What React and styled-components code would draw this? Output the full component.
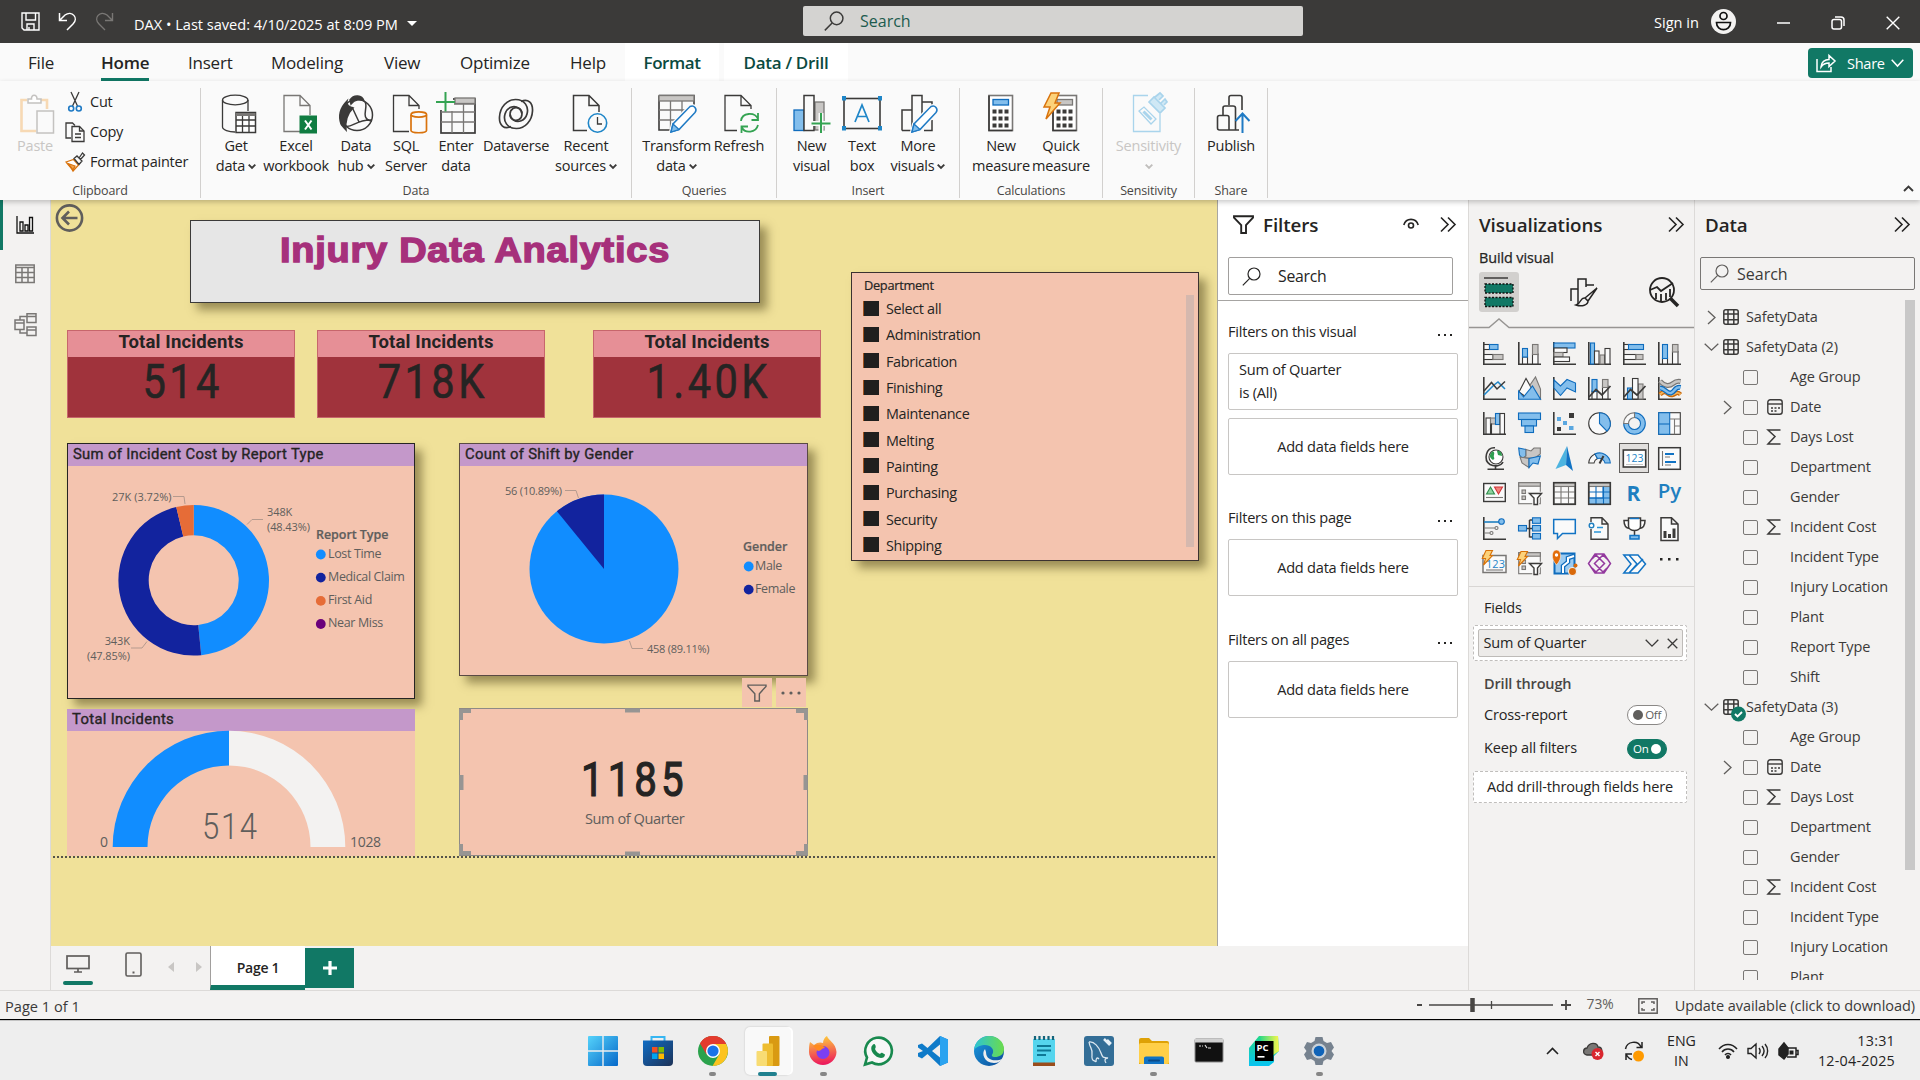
import React from "react";
import styled, { createGlobalStyle, css } from "styled-components";

const UI = `"Open Sans", "Noto Sans", sans-serif`;
const DIN = `Roboto, "Liberation Sans", sans-serif`;
const GREEN = "#117865";
const INK = "#252423";
const K = "#3b3a39";
const BL = "#83beec";
const BS = "#0f6cbd";
const GF = "#c8c6c4";
const GS = "#797775";

const Global = createGlobalStyle`
  * { box-sizing: border-box; }
  html, body { margin: 0; padding: 0; overflow: hidden; }
  body { width: 1920px; height: 1080px; font-family: ${UI}; font-size: 15px; color: ${INK}; background: #f3f2f1; }
  svg { display: block; flex: none; overflow: visible; }
`;

const Window = styled.div`
  width: 1920px; height: 1080px; display: flex; flex-direction: column; overflow: hidden;
`;

/* ---------- text ---------- */
const Txt = styled.span`
  display: block;
  flex: none;
  font-family: ${(p) => p.$font || UI};
  font-size: ${(p) => p.$s || 15}px;
  line-height: ${(p) => p.$lh || 20}px;
  font-weight: ${(p) => p.$w || 400};
  letter-spacing: ${(p) => p.$ls || 0}px;
  color: ${(p) => p.$c || INK};
  white-space: nowrap;
  text-align: ${(p) => p.$align || "left"};
  ${(p) => p.$stroke && css`-webkit-text-stroke: ${p.$stroke}px currentColor;`}
  ${(p) => p.$ml && css`margin-left: ${p.$ml}px;`}
  ${(p) => p.$mt && css`margin-top: ${p.$mt}px;`}
`;
const RibbonText = styled(Txt).attrs({ $s: 14.5, $ls: -0.22 })``;
const PaneText = styled(Txt).attrs({ $s: 14.6, $ls: -0.24 })``;
const VizText = styled(Txt).attrs({ $s: 14.5, $ls: -0.15 })``;
const VisualTitle = styled(Txt).attrs({ $s: 14.8, $w: 400, $font: DIN, $ls: 0.33, $stroke: 0.35 })``;
const PaneTitle = styled(Txt).attrs({ $s: 18.8, $w: 600, $lh: 24, $ls: -0.08 })``;

/* ---------- title bar ---------- */
const TitleBar = styled.header`
  height: 43px; flex: none; background: ${K}; display: flex; align-items: center; color: #fff;
`;
const QuickAccess = styled.div`
  display: flex; align-items: center; width: 803px; padding-left: 21px;
  svg { margin-right: 18px; }
`;
const DocTitle = styled(Txt)`margin-left: 2px; margin-top: 4px;`;
const Caret = styled.i`
  border: 5px solid transparent; border-top-color: #fff; border-bottom: 0; margin: 3px 0 0 9px;
`;
const TopSearch = styled.div`
  width: 500px; height: 30px; margin-top: -1px; background: #d4d3d1; border-radius: 2px; display: flex; align-items: center; gap: 16px; padding-left: 21px;
`;
const WindowControls = styled.div`
  margin-left: auto; display: flex; align-items: center; padding-right: 20px;
`;
const Avatar = styled.div`margin: 0 41px 0 12px;`;
const ControlGap = styled.div`margin-right: ${(p) => p.$r}px; padding-top: 2px;`;

/* ---------- menu tabs ---------- */
const TabBar = styled.nav`
  height: 38px; flex: none; background: #fafafa; display: flex; position: relative; padding-left: 28px;
`;
const Tab = styled.div`
  width: ${(p) => p.$w}px; height: 38px; display: flex; align-items: flex-start; flex: none; padding-top: 8px;
`;
const TabLabel = styled(Txt)`
  height: 30px; border-bottom: 3px solid ${(p) => (p.$on ? GREEN : "transparent")};
`;
const ContextTab = styled.div`
  width: ${(p) => p.$w}px; height: 38px; margin-right: 5px; background: #fff; display: flex; justify-content: center; padding-top: 8px;
`;
const ShareButton = styled.button`
  margin: 5px 7px 0 auto; width: 105px; height: 30px; border: 0; border-radius: 4px; background: ${GREEN}; color: #fff;
  display: flex; align-items: center; padding: 0 0 0 8px; gap: 6px;
`;

/* ---------- ribbon ---------- */
const Ribbon = styled.section`
  height: 119px; flex: none; background: #fafafa; display: flex; position: relative; z-index: 2; box-shadow: 0 2px 5px rgba(0,0,0,.22);
`;
const Group = styled.div`
  width: ${(p) => p.$w}px; flex: none; height: 119px; display: flex; flex-direction: column;
`;
const GroupBody = styled.div`
  display: flex; border-right: 1px solid #d2d0ce; margin-top: 7px; height: 93px; padding: 4px 0 0 ${(p) => p.$pl || 0}px;
`;
const GroupFoot = styled.div`
  height: 17px; display: flex; justify-content: center; align-items: flex-end; border-right: 1px solid #d2d0ce;
`;
const RibbonItem = styled.div`
  width: ${(p) => p.$w}px; flex: none; display: flex; flex-direction: column; align-items: center; 
`;
const IconSlot = styled.div`
  height: 44px; display: flex; align-items: center; justify-content: center; padding-left: ${(p) => p.$pl || 0}px;
`;
const Line = styled.div`
  display: flex; align-items: center; gap: 3px; height: 20px; justify-content: center;
`;
const ClipList = styled.div`
  display: flex; flex-direction: column; gap: 10px; padding: 0 0 0 12px;
`;
const ClipRow = styled.div`
  display: flex; align-items: center; height: 20px;
  > span { margin-left: 5px; }
`;
const ClipIcon = styled.div`width: 20px; display: flex; justify-content: center;`;
const Collapse = styled.div`margin: auto 6px 8px auto;`;

/* ---------- body ---------- */
const Body = styled.main`height: 790px; flex: none; display: flex;`;
const Rail = styled.aside`
  width: 51px; background: #f3f2f1; border-right: 1px solid #dcdad8; display: flex; flex-direction: column;
`;
const RailItem = styled.div`
  height: 50px; display: flex; align-items: center; justify-content: center; padding: 0 3px ${(p) => (p.$on ? 0 : 2)}px 0;
  border-left: 3px solid ${(p) => (p.$on ? GREEN : "transparent")};
`;
const Center = styled.div`width: 1417px; display: flex; flex-direction: column;`;
const Work = styled.div`height: 746px; display: flex;`;
const Canvas = styled.div`
  width: 1167px; height: 746px; background: #f0e199; position: relative; overflow: hidden; border-right: 1px solid #a8a6a2;
`;
const Visual = styled.div`
  position: absolute; left: ${(p) => p.$x - 51}px; top: ${(p) => p.$y - 200}px; width: ${(p) => p.$w}px; height: ${(p) => p.$h}px;
  background: ${(p) => p.$bg || "#f4c4af"};
  ${(p) => p.$border && css`border: 1px solid ${p.$border};`}
  ${(p) => p.$shadow && css`box-shadow: 7px 7px 9px rgba(70,60,20,.5);`}
  display: flex; flex-direction: column;
`;
const Banner = styled(Txt)`
  text-align: center; transform: scaleX(1.1);
`;
const VisualHead = styled.div`
  height: 22px; flex: none; background: #c498ca; padding: 0 0 2px 5px; display: flex; align-items: center;
`;
const CardHead = styled.div`
  height: 26px; flex: none; background: #e68f96; display: flex; justify-content: center; align-items: center; padding-bottom: 5px;
`;
const CardValue = styled(Txt)`
  text-align: center; transform: scaleX(.85); padding-left: 4px;
`;
const ChartBox = styled.div`flex: 1; position: relative;`;
const Label = styled(Txt)`
  position: absolute; left: ${(p) => p.$x}px; top: ${(p) => p.$y}px;
  ${(p) => p.$sx && css`transform: scaleX(${p.$sx}); transform-origin: 0 0;`}
`;
const SlicerHead = styled(Txt)`padding-left: 12px;`;
const SlicerRow = styled.div`
  display: flex; align-items: center; height: 26.45px; gap: 7px; padding: 0 0 2px 11px;
`;
const BlackBox = styled.i`width: 16px; height: 15px; background: #201f1e; border-left: 1px solid #a0501a; margin-bottom: 2px;`;
const SlicerScroll = styled.i`position: absolute; right: 4px; top: 22px; width: 8px; height: 252px; background: #d5b8ae;`;
const PageEdge = styled.i`
  position: absolute; left: 2px; top: 656px; width: 1164px; height: 2px;
  background: repeating-linear-gradient(90deg, #55534a 0 2px, transparent 2px 4px);
`;
const VisualTool = styled.div`
  position: absolute; left: ${(p) => p.$x - 51}px; top: 478px; width: 30px; height: 29px; background: #f4c4af; display: flex; align-items: center; justify-content: center;
`;

/* ---------- filters pane ---------- */
const Filters = styled.section`width: 250px; background: #fff; display: flex; flex-direction: column;`;
const FilterHead = styled.div`
  height: 57px; display: flex; align-items: center; padding: 0 12px 8px 15px; gap: 9px;
`;
const SearchBox = styled.div`
  width: ${(p) => p.$w}px; height: ${(p) => p.$h}px; margin: ${(p) => p.$mt || 0}px 0 0 ${(p) => p.$ml}px; border: 1px solid ${(p) => p.$bc}; border-radius: 2px;
  display: flex; align-items: center; padding-left: ${(p) => p.$pl}px; gap: ${(p) => p.$gap}px; flex: none;
`;
const Rule = styled.i`display: block; height: 1px; background: ${(p) => p.$c || "#a6a4a2"}; margin-top: ${(p) => p.$mt || 0}px; flex: none;`;
const FilterTitle = styled.div`
  display: flex; justify-content: space-between; padding: 0 16px 0 10px; height: 20px; margin: ${(p) => p.$mt}px 0 ${(p) => p.$mb || 12}px; flex: none;
`;
const FilterBox = styled.div`
  width: 230px; height: 57px; margin: 0 0 8px 10px; border: 1px solid #c8c6c4; border-radius: 2px; flex: none;
  display: flex; flex-direction: column; justify-content: center; align-items: ${(p) => (p.$left ? "flex-start" : "center")}; padding: 0 0 1px ${(p) => (p.$left ? 10 : 0)}px;
`;
const Push = styled.div`margin-left: auto; display: flex; align-items: center; gap: ${(p) => p.$gap || 0}px;`;
const Dots = styled.div`display: flex; gap: 4px; align-items: center; padding-top: 8px; i { width: 2px; height: 2px; background: ${INK}; }`;

/* ---------- page tabs ---------- */
const PageStrip = styled.div`height: 44px; background: #f3f2f1; display: flex; align-items: flex-start;`;
const ViewMode = styled.div`
  width: ${(p) => p.$w}px; height: 44px; display: flex; flex-direction: column; align-items: center; padding-top: ${(p) => p.$pt}px; margin-left: ${(p) => p.$ml || 0}px;
`;
const ModeBar = styled.i`width: 30px; height: 4px; border-radius: 2px; background: ${GREEN}; margin-top: 8px;`;
const PageArrow = styled.i`
  border: 5px solid transparent; margin-top: 16px;
  ${(p) => (p.$l ? "border-right: 6px solid #c8c6c4; border-left: 0; margin-left: 26px;" : "border-left: 6px solid #c8c6c4; border-right: 0; margin-left: 22px;")}
`;
const PageTab = styled.div`
  margin-left: 8px; width: 95px; height: 44px; background: #fff; border-left: 1px solid #a19f9d; border-bottom: 5px solid ${GREEN};
  display: flex; justify-content: center; padding-top: 12px;
`;
const AddPage = styled.div`
  width: 49px; height: 40px; margin-top: 2px; background: ${GREEN}; display: flex; align-items: center; justify-content: center;
`;

/* ---------- visualizations pane ---------- */
const Pane = styled.section`
  width: 226px; background: #f3f2f1; border-left: 1px solid #dcdad8; display: flex; flex-direction: column; flex: none;
`;
const PaneHead = styled.div`
  height: 49px; display: flex; align-items: center; padding: 0 10px 0 10px; flex: none;
`;
const BuildLabel = styled.div`padding-left: 10px; height: 23px; margin-top: -1px; margin-bottom: 1px; flex: none;`;
const ModeRow = styled.div`height: 46px; display: flex; padding-left: 10px; align-items: flex-start; flex: none;`;
const ModeButton = styled.div`
  width: 40px; height: 40px; border-radius: 3px; background: ${(p) => (p.$on ? "#d2d0ce" : "transparent")};
  display: flex; align-items: center; justify-content: center; margin-right: ${(p) => p.$mr || 0}px;
`;
const IconGrid = styled.div`
  display: grid; grid-template-columns: repeat(6, 35px); grid-auto-rows: 35px; padding: 10px 0 0 8px; height: 258px; flex: none;
`;
const GridCell = styled.div`
  width: 30px; height: 30px; margin: 0 0 0 2px; display: flex; align-items: center; justify-content: center;
  ${(p) => p.$on && css`background: #e1dfdd; outline: 1px solid #605e5c; outline-offset: -1px;`}
`;
const FieldsLabel = styled.div`padding-left: 15px; margin-top: ${(p) => p.$mt}px; height: 20px; flex: none;`;
const DropZone = styled.div`
  margin: ${(p) => p.$mt}px 0 0 4px; width: 214px; height: ${(p) => p.$h}px; background: #fff; border: 1px dashed #c0bebc; border-radius: 2px;
  display: flex; align-items: center; justify-content: center; flex: none;
`;
const FieldPill = styled.div`
  width: 205px; height: 28px; background: #edebe9; border: 1px solid #bebbb8; border-radius: 2px; display: flex; align-items: center; padding: 0 4px 0 5px;
`;
const ToggleRow = styled.div`
  display: flex; align-items: center; justify-content: space-between; padding: 0 27px 0 15px; height: 20px; margin-top: ${(p) => p.$mt}px; flex: none;
`;
const Toggle = styled.div`
  width: 40px; height: 20px; border-radius: 10px; border: 1px solid ${(p) => (p.$on ? GREEN : "#8a8886")}; background: ${(p) => (p.$on ? GREEN : "#fff")};
  display: flex; align-items: center; justify-content: space-between; flex-direction: ${(p) => (p.$on ? "row" : "row-reverse")}; padding: 0 5px;
  i { width: 10px; height: 10px; border-radius: 5px; background: ${(p) => (p.$on ? "#fff" : "#605e5c")}; }
`;

/* ---------- data pane ---------- */
const TreeWrap = styled.div`display: flex; height: 680px; overflow: hidden; margin-top: 10px; flex: none;`;
const Tree = styled.div`width: 210px; padding-top: 2px; flex: none;`;
const TreeRow = styled.div`height: 30px; display: flex; align-items: center; padding-left: ${(p) => p.$pl || 8}px;`;
const Slot = styled.div`width: ${(p) => p.$w}px; flex: none; display: flex; align-items: center; justify-content: ${(p) => (p.$c ? "center" : "flex-start")}; padding-left: ${(p) => p.$pl || 0}px;`;
const Check = styled.i`width: 15px; height: 15px; border: 1px solid #797775; border-radius: 2px; flex: none;`;
const TreeScroll = styled.i`width: 10px; height: 570px; background: #c8c8c8;`;

/* ---------- status bar ---------- */
const StatusBar = styled.footer`
  height: 30px; flex: none; background: #f3f2f1; border-top: 1px solid #dcdad8; border-bottom: 1px solid #000; display: flex; align-items: center; padding: 2px 5px 0 5px;
`;
const Zoom = styled(Txt)`margin: -4px 24px 0 16px;`;
const Taskbar = styled.footer`
  height: 60px; flex: none; background: #eee; display: flex; align-items: center; border-top: 1px solid #c4c4c4;
`;
const AppRow = styled.div`display: flex; padding-left: 575px; flex: none;`;
const AppSlot = styled.div`
  width: 55.15px; height: 60px; display: flex; align-items: center; justify-content: center; position: relative;
`;
const AppActive = styled.div`
  width: 46px; height: 48px; border-radius: 5px; background: #f9f9f9; box-shadow: 2px 0 0 #fff, 0 0 2px rgba(0,0,0,.2); display: flex; align-items: center; justify-content: center;
`;
const Running = styled.i`
  position: absolute; bottom: 5px; width: ${(p) => (p.$on ? 19 : 7)}px; height: 4px; border-radius: 2px; background: ${(p) => (p.$on ? "#20808f" : "#868686")};
`;
const Tray = styled.div`margin-left: auto; display: flex; align-items: center; padding-right: 25px;`;
const TrayItem = styled.div`margin-left: ${(p) => p.$ml}px;`;

/* ================= icons ================= */
const S = ({ w = 24, h, vb, children, sw = 1.3, c = K, ...r }) => (
  <svg width={w} height={h || w} viewBox={vb || `0 0 ${w} ${h || w}`} fill="none" stroke={c} strokeWidth={sw} {...r}>{children}</svg>
);
const R = ({ x, y, w, h, t = "w" }) => {
  const f = { w: ["#fafafa", K], b: [BL, BS], g: [GF, GS] }[t];
  return <rect x={x} y={y} width={w} height={h} fill={f[0]} stroke={f[1]} />;
};
const Mag = ({ w = 19, c = K, sw = 1.4 }) => (
  <S w={w} vb="0 0 19 19" c={c} sw={sw}><circle cx="12" cy="7" r="6" /><path d="M7.7 11.3L.8 18.4" /></S>
);
const Chev = ({ w = 15, h = 8, c = K, sw = 1.3 }) => <S w={w} h={h} c={c} sw={sw}><path d={`M.7 .7L${w / 2} ${h - 0.9}L${w - 0.7} .7`} /></S>;
const Double = () => <S w={16} h={16} sw={1.6} c={INK}><path d="M1 .5l7 7-7 7M8 .5l7 7-7 7" /></S>;
const Funnel = ({ w = 21, h = 19, c = INK, sw = 1.9 }) => (
  <S w={w} h={h} vb="0 0 21 19" c={c} sw={sw}><path d="M1 1.2H20V2.6L13 10.2V18H8.2V10.2L1 2.6Z" /></S>
);
const Bolt = () => <path d="M4.5-.5H11L8.5 4.5H11L2 14L4 7.5H.8Z" fill="#fcd27a" stroke="#d87208" />;
const axes = <path d="M.8 0V22.2H23" strokeWidth="1.6" />;

const iconShift = { get: 6, excel: 7, hub: 2, sql: 7, recent: 7, refresh: 5, publish: 5, moreVisuals: 3, transform: 2, sens: 3 };
const ribbonIcons = {
  paste: <S w={36} h={40} c="#c4c2c0" sw={1.5}><path d="M7 6H1.5V37H16" stroke="#f7d9b4" strokeWidth="2.6" /><path d="M21 6h6v9" stroke="#f7d9b4" strokeWidth="2.6" /><path d="M8 9V5h3.500C11 0 17 0 17 5H21v4Z" fill="#fff" /><rect x="17" y="17" width="16.500" height="22" fill="#fafafa" /></S>,
  cut: <S w={14} h={20} sw={1.3}><path d="M3 0L9.500 14M11 0L4.500 14" /><g stroke="#1f7ac4" strokeWidth="1.600"><circle cx="3.200" cy="16.500" r="2.500" /><circle cx="10.800" cy="16.500" r="2.500" /></g></S>,
  copy: <S w={20} h={20} sw={1.300}><path d="M6 16H1V1H7.500L10 3.500" /><path d="M7 4.500H14.500L19 9V19.500H7Z" fill="#fafafa" /><path d="M14.500 4.500V9H19M10 12h6M10 15.500h6" /></S>,
  painter: <S w={20} h={20} sw={1.300}><path d="M1 10L8.500 7.500L13.500 13L8 19C6 15 3 13 1 10Z" stroke="#d9730d" fill="#fff" /><path d="M3 11.500L8 18 10 14Z" fill="#f2a34d" stroke="#d9730d" /><path d="M9 6.500L12 4 17 9 14 12.500ZM14 6L17.500 1 19.500 3 15.500 7.500" fill="#fafafa" /></S>,
  get: <S w={36} h={40}><path d="M1.500 6V33C1.500 36 8 38 14 38M27 6V17" /><ellipse cx="14.200" cy="6" rx="12.700" ry="4.800" /><rect x="15" y="18.500" width="19.500" height="20" fill="#fff" strokeWidth="1.500" /><path d="M15 20.500H34.500" stroke="#797775" strokeWidth="3" /><path d="M15 26H34.500M15 32H34.500M21.500 22V38M28 22V38" /></S>,
  excel: <S w={34} h={40} c="#797775"><path d="M17 37.500H1V1.500H17L27 11.500V21M17 1.500V11.500H27" /><rect x="16.500" y="21.500" width="17.500" height="18" fill="#107c41" stroke="none" /><path d="M22 26.500l6.500 9M28.500 26.500l-6.500 9" stroke="#fff" strokeWidth="2" /></S>,
  hub: <S w={36} h={38} sw={1.500}><circle cx="18" cy="20" r="15.500" /><path d="M8 6C2 12-1 20 2 29C3 31 5 33 7 35C6 26 9 18 14 13C10 12 7 10 8 6Z" fill={K} /><path d="M11 5C15-1 23 0 25 6C22 4 16 4 12 9Z" fill={K} /><path d="M13 12L20 27M26 7C30 12 20 24 33 26M5 31C13 34 17 24 33 25" /></S>,
  sql: <S w={36} h={40}><path d="M17 37.500H1.500V1.500H17L27 11.500V15M17 1.500V11.500H27" /><path d="M19 21V36.500C19 39.500 34.500 39.500 34.500 36.500V21" fill="#fafafa" stroke="#d9730d" strokeWidth="1.700" /><ellipse cx="26.800" cy="20.500" rx="7.800" ry="2.600" stroke="#d9730d" fill="#fafafa" strokeWidth="1.700" /></S>,
  enter: <S w={40} h={42}><rect x="5" y="6" width="34" height="34" fill="#fafafa" strokeWidth="1.700" /><rect x="19" y="5" width="20" height="5.500" fill={GF} stroke={GS} /><path d="M5 19H39M5 29H39M16 18V40M27.500 11V40M18 11H39" stroke="#797775" /><rect x="1" y="-2" width="16" height="19" fill="#fafafa" stroke="none" /><path d="M9.500-1V18.500M0 9H19" stroke="#34a352" strokeWidth="2" /></S>,
  dataverse: <S w={36} h={32} sw={1.700}><path d="M13 28.500C6 32 1 27 1.500 19C2 9 9 1.500 17.500 1.500C27 1.500 31 9 29 16C27 23 20 25 15.500 22C11 19 11 13 15 10.500C19 8 24 11 24 15.500" /><path d="M23 3.500C30 0 35 5 34.500 13C34 23 27 30.500 18.500 30.500C9 30.500 5 23 7 16C9 9 16 7 20.500 10C25 13 25 19 21 21.500C17 24 12 21 12 16.500" /></S>,
  recent: <S w={36} h={40}><path d="M15 36.500H1.500V1.500H17L27 11.500V18M17 1.500V11.500H27" strokeWidth="1.500" /><circle cx="25.500" cy="29" r="9.200" fill="#fafafa" stroke="#1f86c8" strokeWidth="1.600" /><path d="M25.500 23V30H30" /></S>,
  transform: <S w={40} h={40}><path d="M1 1.500H36V14M1 1.500V36H12" strokeWidth="1.600" /><rect x="1" y="1.500" width="35" height="5.500" fill={GF} stroke={GS} /><path d="M1 16H29M1 26H18M12.500 7V36M24 7V20" stroke={GS} /><Pencil /></S>,
  refresh: <S w={36} h={40}><path d="M13 36.500H1V1.500H17L27 11.500V15M17 1.500V11.500H27" /><g stroke="#34a352" strokeWidth="1.800"><path d="M17 27C18 18 31 18 34 25M34 19V26H27.500M34 31C32 39 21 40 17.500 33M17.500 39V32.500H24" /></g></S>,
  newVisual: <S w={38} h={40}><rect x="1" y="16" width="10" height="20.500" fill={BL} stroke={BS} /><rect x="22" y="8" width="9" height="28" fill={GF} stroke={GS} /><rect x="11" y="1.500" width="10" height="35" fill="#fafafa" strokeWidth="1.500" /><path d="M28 19V39M18.500 29.500H37.500" stroke="#fafafa" strokeWidth="5" /><path d="M28 19V39M18.500 29.500H37.500" stroke="#34a352" strokeWidth="2" /></S>,
  textBox: <S w={40} h={36}><rect x="2" y="2.500" width="36" height="30" strokeWidth="1.600" /><g fill="#1f86c8" stroke="none"><rect width="4" height="4.500" /><rect x="36" width="4" height="4.500" /><rect y="30" width="4" height="4.500" /><rect x="36" y="30" width="4" height="4.500" /></g><path d="M13 26L20 9L27 26M15.500 20.500H24.500" stroke="#1f86c8" strokeWidth="1.700" /></S>,
  moreVisuals: <S w={38} h={40}><path d="M1 36.500V16H11M11 36.500V1.500H21V20M21 8H31V14M1 36.500H13M23 36.500H31V26" strokeWidth="1.500" /><g transform="translate(-2 0)"><Pencil /></g></S>,
  calc: <Calc />,
  quick: <S w={36} h={40}><g transform="translate(9 0)"><CalcBody c={GF} s={GS} /></g><path d="M8-1H16L12 9H17L3 25L7 13H1Z" fill="#fcd27a" stroke="#d9730d" strokeWidth="1.500" /></S>,
  sens: <S w={36} h={40} c="#a9d4ec"><path d="M16 1.500H1.500V37.500H28V20" /><path d="M7 17L12 13L24 25L19 30Z" fill="#fafafa" /><path d="M11.500 17.500l8 8" strokeWidth="3" /><path d="M17 8L22 3L33 14L28 19ZM23 3L28-1 31 2 27 6M29 9L33 5 35 8 32 11" fill="#cfe8f5" strokeWidth="1.700" /></S>,
  publish: <S w={36} h={40}><path d="M1.500 23.500Q1.500 21.500 3.500 21.500H11Q13 21.500 13 23.500V36H3.500Q1.500 36 1.500 34ZM7 21V14Q7 12 9 12H17Q19.500 12 19.500 14V36H13M13 11V3.500Q13 1.500 15 1.500H24Q26 1.500 26 3.500V16M20 36H23" strokeWidth="1.600" /><path d="M26.500 39V19.500M19.500 27L26.500 19.500L33.500 27" stroke="#1f7ac4" strokeWidth="2" /></S>,
};
function Pencil() {
  return <g><path d="M13 38L15 30L32 12.500Q35 11 37 13.500Q39 16 37 18.500L21 35.500Z" fill="#fafafa" stroke="#fafafa" strokeWidth="4" /><path d="M13 38L15 30L32 12.500Q35 11 37 13.500Q39 16 37 18.500L21 35.500Z" fill="#fff" stroke="#1f7ac4" strokeWidth="1.500" /><path d="M13 38L15 30L21 35.500Z" fill={BL} stroke="#1f7ac4" /></g>;
}
function CalcBody({ c = BL, s = BS }) {
  const d = [];
  for (let i = 0; i < 3; i++) for (let j = 0; j < 3; j++) d.push(<rect key={`${i}${j}`} x={4.500 + i * 6} y={15.500 + j * 7} width="4" height="4" fill={K} stroke="none" />);
  return <g><rect x="1" y="1.500" width="23.500" height="35" fill="#fff" strokeWidth="1.600" stroke={GS} /><path d="M1 1.500V36.500H24.500" strokeWidth="1.600" /><rect x="5" y="5.500" width="15.500" height="5.500" fill={c} stroke={s} />{d}</g>;
}
function Calc() { return <S w={26} h={40}><CalcBody /></S>; }

const card123 = (
  <g><rect x="0" y="2.500" width="23" height="17" fill="#fafafa" stroke={GS} strokeWidth="1.500" /><text x="12.500" y="14.500" fontFamily={UI} fontSize="11" textAnchor="middle" fill="#1f86c8" stroke="none">123</text><path d="M3 17H20" stroke={GS} /></g>
);
const filterList = (
  <g><rect x="0.700" y="0.700" width="21.600" height="21" fill="#fafafa" stroke={GS} /><rect x="0.700" y="0.700" width="21.600" height="3.500" fill={GF} stroke={GS} /><rect x="4" y="8" width="3.500" height="3.500" fill={GF} stroke={GS} /><rect x="4" y="14" width="3.500" height="3.500" fill={GF} stroke={GS} /><path d="M11.500 11.500H23.500L19.500 16V22.500H16V16Z" fill="#fff" stroke="#f3f2f1" strokeWidth="3.500" /><path d="M11.500 11.500H23.500L19.500 16V22.500H16V16Z" fill="#fff" strokeWidth="1.400" /></g>
);
const gridLines = <path d="M.7 10H22.300M.7 16H22.300M8 4.500V22M15.500 4.500V22" stroke={GS} />;

const vizIcons = [
  <g>{axes}<R x={1} y={2.500} w={5.500} h={5} /><R x={6.500} y={2.500} w={8.500} h={5} t="b" /><R x={1} y={12.500} w={9} h={5} /><R x={10} y={12.500} w={10} h={5} t="g" /></g>,
  <g>{axes}<R x={4.500} y={15} w={5} h={7} /><R x={4.500} y={6.500} w={5} h={8.500} t="b" /><R x={14.500} y={12} w={5.500} h={10} /><R x={14.500} y={2.500} w={5.500} h={10} t="g" /></g>,
  <g>{axes}<R x={1} y={1} w={21} h={5} t="b" /><R x={1} y={6} w={13} h={4.500} /><R x={1} y={10.500} w={9} h={4.500} t="g" /><R x={1} y={15} w={15.500} h={4.500} /></g>,
  <g>{axes}<R x={2.500} y={1} w={4} h={21} t="b" /><R x={6.500} y={9} w={4.500} h={13} /><R x={12} y={13} w={4.500} h={9} t="g" /><R x={17} y={6.500} w={5} h={15.500} /></g>,
  <g>{axes}<R x={1} y={2.500} w={5} h={5} /><R x={5.500} y={2.500} w={15} h={5} t="b" /><R x={1} y={12.500} w={12} h={5} /><R x={13} y={12.500} w={7} h={5} t="g" /></g>,
  <g>{axes}<R x={4.500} y={16} w={5} h={6} /><R x={4.500} y={2.500} w={5} h={14} t="b" /><R x={14.500} y={9.500} w={5.500} h={12.500} /><R x={14.500} y={2.500} w={5.500} h={7.500} t="g" /></g>,
  <g>{axes}<path d="M1 18L11 8 15 5 22 12" stroke="#1f86c8" strokeWidth="1.500" /><path d="M1 14L8.500 5.500 14 12 22 4.500" strokeWidth="1.500" /></g>,
  <g><path d="M1 15L8 1.500 15 14 8 20Z" fill="#fafafa" /><path d="M12 8L17.500 0 22.500 12V22L14 12Z" fill={GF} stroke={GS} /><path d="M.6 14L5.500 20 14.500 9 22.500 22.300H.6Z" fill={BL} stroke={BS} /></g>,
  <g>{axes}<path d="M1 3L7.500 9 14 2.500 22.500 6V15L14 11 7.500 18.500 1 11Z" fill={BL} stroke={BS} /></g>,
  <g>{axes}<R x={4} y={14} w={5} h={8} /><R x={4} y={2.500} w={5} h={12} t="b" /><R x={14.500} y={9} w={5.500} h={13} /><R x={14.500} y={2.500} w={5.500} h={8} t="g" /><path d="M1 20L8 12.500 14 18 22.500 9" strokeWidth="1.700" /></g>,
  <g>{axes}<R x={4.500} y={11} w={5} h={11} t="b" /><R x={15} y={7} w={5} h={15} t="g" /><R x={9.500} y={1.500} w={5.500} h={20.500} /><path d="M1 20L7.500 12.500 14 18 22.500 9" strokeWidth="1.700" /></g>,
  <g>{axes}<path d="M2 17.500C8 11 10 19 14 18S19 14 22.500 17.500" stroke="#c9690a" strokeWidth="4.500" /><path d="M2 17.500C8 11 10 19 14 18S19 14 22.500 17.500" stroke="#f5b45c" strokeWidth="2" /><path d="M2 4C7 10 12 9 15 6.500S20 4 22.500 4.500" stroke={GS} strokeWidth="5" /><path d="M2 4C7 10 12 9 15 6.500S20 4 22.500 4.500" stroke={GF} strokeWidth="2.600" /><path d="M2 11C7 11 9 17 13 16S17 9 22.500 10.500" stroke={BS} strokeWidth="5" /><path d="M2 11C7 11 9 17 13 16S17 9 22.500 10.500" stroke={BL} strokeWidth="2.400" /></g>,
  <g>{axes}<R x={3} y={6} w={4.500} h={16} /><R x={7.500} y={6} w={5} h={6} t="g" /><R x={8} y={12} w={0.500} h={10} /><R x={12.500} y={1.500} w={4.500} h={11} t="b" /><R x={17} y={1.500} w={4.500} h={20.500} /></g>,
  <g><R x={0.500} y={1} w={22} h={6.500} t="b" /><R x={3.500} y={7.500} w={15} h={6.500} t="b" /><R x={7} y={14} w={8.500} h={6.500} t="b" /></g>,
  <g>{axes}<g stroke="none"><rect x="16" y="1" width="5" height="5" fill={K} /><rect x="4" y="15" width="4" height="4" fill={K} /><rect x="4" y="5" width="4" height="4" fill="#5aa7e0" /><rect x="10" y="9" width="4" height="4" fill="#5aa7e0" /><rect x="16" y="14" width="4.500" height="4" fill="#5aa7e0" /></g></g>,
  <g><circle cx="11.500" cy="11.500" r="10.800" fill="#fafafa" /><path d="M11.500.7A10.800 10.800 0 0 1 19 19.200L11.500 11.500Z" fill={BL} stroke={BS} /></g>,
  <g><path d="M11.500.7A10.800 10.800 0 1 1 .7 11.500H5.500A6 6 0 1 0 11.500 5.500Z" fill={BL} stroke={BS} /><path d="M.7 11.500A10.800 10.800 0 0 1 11.500.7V5.500A6 6 0 0 0 5.500 11.500Z" fill="#fafafa" stroke={GS} /></g>,
  <g><rect x=".7" y=".7" width="21.600" height="21.600" fill="#fafafa" /><rect x=".7" y=".7" width="11" height="21.600" fill={BL} stroke={BS} /><path d="M.7 12H11.700" stroke={BS} /><path d="M11.700 7H22.300M16.500 7V22.300M16.500 14H22.300" stroke={GS} /></g>,
  <g><circle cx="13" cy="10" r="7" fill="#fff" /><path d="M8 6C10 3 12 5 11 8S13 11 10 13C7 11 6 9 8 6ZM14 4C17 3 19 6 19 9L15 8Z" fill="#2e9e4f" stroke="none" /><path d="M12 .8C3 0 0 13 7 17.500 12 20 18 19 20 15M12.500 19.500V22M4.500 22.300H21" strokeWidth="1.600" /></g>,
  <g><path d="M.7 1L8 2.500V9L5 12 1.500 8Z" fill={BL} stroke={BS} /><path d="M8 2.500L13 4 16 1 22.300 1V7L17 11H5L8 9Z" fill={GF} stroke={GS} /><path d="M2 10L11 11.500V20.500L4 16Z" fill={GF} stroke={GS} /><path d="M11 11.500L22.300 9 20 17 15 16 11 20.500Z" fill={BL} stroke={BS} /></g>,
  <g stroke="none"><path d="M14-1L2.500 22 13 18Z" fill="#4db4e0" /><path d="M14-1L20 24 13 18Z" fill="#1173c4" /></g>,
  <g><path d="M.7 16A10.800 10.800 0 0 1 7 7L9.500 11.500A6 6 0 0 0 6 16Z" fill="#fafafa" /><path d="M7 7A10.800 10.800 0 0 1 22.300 16H17A6 6 0 0 0 9.500 11.500Z" fill={BL} stroke={BS} /><path d="M11.500 16.500L15.500 9" strokeWidth="2" /></g>,
  <g><rect x=".3" y="3" width="22.400" height="17" fill="#fff" stroke={K} strokeWidth="1.600" /><text x="11.500" y="14.500" fontFamily={UI} fontSize="10.500" textAnchor="middle" fill="#1f86c8" stroke="none">123</text><path d="M3 17.500H20" stroke={GF} /></g>,
  <g><rect x=".7" y=".7" width="21.600" height="21.600" fill="#fafafa" strokeWidth="1.500" /><path d="M4.500 4V19" stroke={GS} /><path d="M7 7H16M7 15H18" stroke="#1173c4" strokeWidth="2" /><path d="M7 10H12M7 18H13" stroke={GS} /></g>,
  <g><rect x=".7" y="1.500" width="21.600" height="18" fill="#fafafa" strokeWidth="1.400" /><path d="M3.500 12L7.500 5 11.500 12Z" fill="#8fd19e" stroke="#2e8b4a" /><path d="M11.500 5H19.500L15.500 12Z" fill="#f0837a" stroke="#d13438" /><path d="M3 15.500H20" stroke={GS} /></g>,
  filterList,
  <g><rect x=".7" y=".7" width="21.600" height="21.600" fill="#fafafa" strokeWidth="1.500" /><rect x=".7" y=".7" width="21.600" height="3.800" fill={GF} stroke={GS} />{gridLines}<rect x=".7" y=".7" width="21.600" height="21.600" strokeWidth="1.500" /></g>,
  <g><rect x=".7" y=".7" width="21.600" height="21.600" fill="#fafafa" strokeWidth="1.500" /><path d="M15 4.500H22.300V22.300H.7V16H15Z" fill={BL} stroke={BS} /><rect x=".7" y=".7" width="21.600" height="3.800" fill={GF} stroke={GS} /><path d="M.7 10H22.300M.7 16H22.300M8 4.500V22M15.500 4.500V22" stroke={BS} /><rect x=".7" y=".7" width="21.600" height="21.600" strokeWidth="1.500" /></g>,
  <text x="10.500" y="18.500" fontFamily={UI} fontWeight="700" fontSize="21" textAnchor="middle" fill="#1f7fc0" stroke="none">R</text>,
  <text x="11.500" y="16" fontFamily={UI} fontWeight="600" fontSize="20.500" textAnchor="middle" fill="#1f7fc0" stroke="none">Py</text>,
  <g>{axes}<path d="M1 5H16" stroke="#1f7fc0" strokeWidth="1.600" /><circle cx="18.500" cy="4.500" r="2.800" fill={BL} stroke={BS} /><path d="M1 11H12M1 16H7" stroke={GS} /><circle cx="13.500" cy="11" r="1.500" stroke={GS} /><circle cx="8.500" cy="16" r="1.500" stroke={GS} /></g>,
  <g><path d="M8 11.500H14M11.500 3V20.500M11.500 3H15M11.500 20H15" strokeWidth="1.500" /><R x={0.500} y={8.500} w={8} h={5.500} t="b" /><R x={14.500} y={0.800} w={8} h={5.500} t="b" /><R x={14.500} y={8.500} w={8} h={5.500} t="b" /><R x={14.500} y={16.500} w={8} h={5.500} t="b" /></g>,
  <path d="M.7 2.500H22.300V16.500H9.500L4.500 21.500V16.500H.7Z" fill="#fafafa" stroke="#1173c4" strokeWidth="1.500" />,
  <g><path d="M3 5V.8H14L20 7V22.300H3V12M14 .8V7H20" fill="#fafafa" strokeWidth="1.400" /><circle cx="3.500" cy="8.500" r="2.300" fill="#fff" stroke="#1f7fc0" strokeWidth="1.400" /><path d="M9 10.500H15M6 15H13" stroke="#2b95d6" strokeWidth="1.500" /></g>,
  <g><path d="M5.500 1H17.500V9C17.500 15 5.500 15 5.500 9ZM5.500 3.500H1C1 8 2 11 6.500 11.500M17.500 3.500H22C22 8 21 11 16.500 11.500M11.500 13.500V18.500" fill="#fff" strokeWidth="1.500" /><path d="M7 1.500H16M7 18.500H16V22H7Z" stroke="#1173c4" fill={BL} strokeWidth="1.500" /></g>,
  <g><path d="M3 .8H13.500L20 7V23.500H3ZM13.500 .8V7H20" fill="#fafafa" strokeWidth="1.500" /><path d="M7 14V21M11.500 17V21M16 11.500V21" strokeWidth="3" /></g>,
  <g transform="translate(0 1)">{card123}<g transform="translate(-1.500 -2)"><Bolt /></g></g>,
  <g>{filterList}<g transform="translate(-1.500 0)"><Bolt /></g></g>,
  <g><rect x="1.500" y="1.500" width="20" height="20" fill="#9ccbf0" stroke={BS} strokeWidth="2" /><path d="M21 4L15 6V10L10 14V21" stroke={BS} strokeWidth="4.500" /><path d="M21 4L15 6V10L10 14V21" stroke="#fff" strokeWidth="2" /><path d="M3.500 13C-3 6-1-2 3.500-2S10 6 3.500 13Z" fill="#e36c09" stroke="#f3f2f1" strokeWidth=".6" /><circle cx="3.500" cy="3" r="1.700" fill="#fff" stroke="none" /><circle cx="19.500" cy="19.500" r="4" fill="#d9690a" stroke="#f3f2f1" /><circle cx="22.500" cy="13.500" r="2" fill="#d9690a" stroke="none" /></g>,
  <g stroke="#93399e" strokeWidth="1.500"><path d="M7 2H16L22.500 11.500 16 21H7L.5 11.500ZM7 2L16.500 11.500 7 21M16 2L6.500 11.500 16 21M4 7L9 2M19 7L14 2M4 16L9 21M19 16L14 21" /></g>,
  <g stroke="#1173c4" strokeWidth="1.500"><path d="M.8 3H15L22.500 12 15 21H.8L8 12ZM6 3L14 12 6 21M6 21L20 7" fill="#fff" fillOpacity=".6" /></g>,
  <g fill={INK} stroke="none"><rect x="2" y="6" width="2.500" height="2.500" /><rect x="10" y="6" width="2.500" height="2.500" /><rect x="18" y="6" width="2.500" height="2.500" /></g>,
];

const TableIcon = ({ ok }) => (
  <S w={16} h={16} sw={1.500} c={K}><rect x=".8" y=".8" width="14.400" height="14.400" rx="2" /><path d="M.8 5H15.200M.8 10.800H15.200M5 .8V15.200M10.800 .8V15.200" />{ok && <g><circle cx="15.500" cy="15" r="7.500" fill={GREEN} stroke="none" /><path d="M12 15l2.500 2.500 4.500-4.500" stroke="#fff" strokeWidth="1.900" /></g>}</S>
);
const Sigma = () => <S w={14} h={16} sw={1.500} c={K}><path d="M13.500 1H1L8 7.500 1 15H13.500" /></S>;
const Cal = () => <S w={16} h={16} c={K} sw={1.400}><rect x=".8" y=".8" width="14.400" height="14.400" rx="2.500" /><path d="M.8 5H15.200" /><path d="M4 9h2M7.500 9h2M11 9h2M4 12h2M7.500 12h2" strokeWidth="1.700" /></S>;
const ChevR = () => <S w={9} h={15} c="#605e5c" sw={1.300}><path d="M1 1L8 7.500 1 14" /></S>;

/* ---------- task bar app icons ---------- */
const A = ({ children }) => <svg width="30" height="30" viewBox="0 0 30 30">{children}</svg>;
const LG = ({ id, a, b, x2 = 1, y2 = 1 }) => <linearGradient id={id} x1="0" y1="0" x2={x2} y2={y2}><stop offset="0" stopColor={a} /><stop offset="1" stopColor={b} /></linearGradient>;
const apps = [
  { i: <A><defs><LG id="win" a="#55d3fb" b="#0668c9" /></defs><path d="M0 1Q0 0 1 0H14.300V14.300H0ZM15.700 0H29Q30 0 30 1V14.300H15.700ZM0 15.700H14.300V30H1Q0 30 0 29ZM15.700 15.700H30V29Q30 30 29 30H15.700Z" fill="url(#win)" /></A> },
  { i: <A><defs><LG id="store" a="#0f6cc4" b="#1d3257" /></defs><path d="M8.500 5V1H21.500V5" fill="none" stroke="#36b6f2" strokeWidth="2" /><path d="M0 4.500H30V26Q30 30 26 30H4Q0 30 0 26Z" fill="url(#store)" /><rect x="9" y="11" width="5.500" height="5.500" fill="#f25022" /><rect x="15.500" y="11" width="5.500" height="5.500" fill="#7fba00" /><rect x="9" y="17.500" width="5.500" height="5.500" fill="#00a4ef" /><rect x="15.500" y="17.500" width="5.500" height="5.500" fill="#ffb900" /></A> },
  { run: 1, i: <A><circle cx="15" cy="15" r="15" fill="#2ba24c" /><path d="M15 15L2 7.500A15 15 0 0 1 28 7.500Z" fill="#e33b2e" /><path d="M15 8H28.200A15 15 0 0 1 14.500 30L21.500 18Z" fill="#fcc31e" /><path d="M2 7.500L8.500 18.500 15 8H28.200A15 15 0 0 0 2 7.500" fill="#e33b2e" /><circle cx="15" cy="15" r="7" fill="#fff" /><circle cx="15" cy="15" r="5.600" fill="#1a73e8" /></A> },
  { on: 1, run: 1, i: <A><rect x="16" y="0" width="10.500" height="30" rx="1" fill="#d99a12" /><rect x="9.500" y="7.500" width="10.500" height="22.500" rx="1" fill="#eebd30" /><rect x="3.500" y="15" width="10.500" height="15" rx="1" fill="#f8dc73" /></A> },
  { run: 1, i: <A><defs><LG id="ff" a="#ffd43a" b="#ec1b5c" x2={0.100} /></defs><path d="M2 6L6 9C9 6 13 6 15 7C15 4 17 1 19 0C20 4 28 7 28.500 16C28.500 23 22 29 15 29S1 23 1 16C1 12 1 9 2 6Z" fill="url(#ff)" /><circle cx="15" cy="16.500" r="6.500" fill="#7b3ff2" /><path d="M5 10C10 7 16 10 17 12C13 12 14 15 10 15Z" fill="#ff8a1e" /></A> },
  { i: <A><path d="M2 28.500L4 21.500A13.300 13.300 0 1 1 9 26.500Z" fill="#f7f7f7" stroke="#18894e" strokeWidth="2.600" /><path d="M10 8.500C11 7.500 12 8 12.500 9.500S12.500 12 12 13C13 15.500 15 17.500 17 18C18 17 18.500 16.500 19.500 17L22 18.500C22 21 20 22 18 22C12 21.500 7 15 8.500 10.500Z" fill="#18894e" /></A> },
  { i: <A><path d="M22 0L30 3.500V26.500L22 30L9.500 18L4 22.500L0 20.500V17L5 15L0 11.500V9L4 7.500L9.500 12ZM22 8.500L14 15L22 21.500Z" fill="#0f7bc9" fillRule="evenodd" /><path d="M22 0L30 3.500V26.500L22 30Z" fill="#2ba3f0" /></A> },
  { i: <A><defs><LG id="edge" a="#1b9de2" b="#0c4a97" /><LG id="edge2" a="#2cc3d5" b="#6bdc4b" y2={0} /></defs><circle cx="15" cy="15" r="15" fill="url(#edge)" /><path d="M0 14C1 5 8 0 15 0C24 0 30 6 30 13C30 19 25 21 21 21C18 21 17 19.500 18.500 18C21 13 16 8.500 10 9C5 9.500 1 12 0 14Z" fill="url(#edge2)" /><path d="M11 13C7 17 10 27 20 27C24 27 27 25 28 23C24 25 12 26 12 16Z" fill="#eee" /></A> },
  { i: <A><rect x="4" y="3" width="22" height="25" fill="#55d5ee" /><rect x="4" y="26.500" width="22" height="3.500" fill="#9a4d1c" /><path d="M6 0V4M10.500 0V4M15 0V4M19.500 0V4M24 0V4" stroke="#14647b" strokeWidth="2.200" /><path d="M8 10H22M8 14.500H22M8 19H17" stroke="#0e7896" strokeWidth="2" /></A> },
  { i: <A><rect x="0" y="0" width="30" height="30" rx="3" fill="#336e97" /><path d="M5 6C10 5 15 11 17 17S20 21 24 22C21 22 20 24 22 27M5 6C6 13 9 12 8 19S11 24 12 26C12 22 13 21 15 23" fill="none" stroke="#dbe7f0" strokeWidth="1.300" /><path d="M20 3L26 9M23 4L27 8" stroke="#e6f0f7" strokeWidth="2.500" /></A> },
  { run: 1, i: <A><path d="M0 4Q0 2 2 2H10L13 5H28Q30 5 30 7V28H0Z" fill="#dea106" /><rect x="0" y="7" width="30" height="21" rx="2" fill="#ffcf48" /><path d="M5 28V22Q5 20.500 7 20.500H23Q25 20.500 25 22V28Z" fill="#1173c4" /><rect x="9" y="23.500" width="12" height="2" rx="1" fill="#0b4b88" /></A> },
  { i: <A><rect x="1" y="3" width="28" height="23" rx="1" fill="#111" stroke="#8a8a8a" /><rect x="1" y="3" width="28" height="3.500" fill="#d0d0d0" /><path d="M5 10h2M8 10h1M11 9l2 3M14 12h3" stroke="#ddd" strokeWidth="1.200" /></A> },
  { i: <A><defs><LG id="pc" a="#21d789" b="#07c3f2" x2={0} /><LG id="pc2" a="#21d789" b="#fcf84a" y2={0} /></defs><path d="M10 0H29L30 15 25 20V26L20 30H0V12Z" fill="url(#pc)" /><path d="M10 0H29L30 15 20 22Z" fill="url(#pc2)" /><rect x="6" y="5" width="18.500" height="20" fill="#000" /><text x="7.500" y="14.500" fontFamily={UI} fontSize="9.500" fontWeight="700" fill="#fff">PC</text><rect x="8.500" y="20" width="7" height="1.600" fill="#fff" /></A> },
  { run: 1, i: <A><path d="M11.500 1H18.500L19.500 5L23 7L27 6L30 11.500L27.500 15L30 18.500L27 24L23 23L19.500 25L18.500 29H11.500L10.500 25L7 23L3 24L0 18.500L2.500 15L0 11.500L3 6L7 7L10.500 5Z" fill="#76828f" /><circle cx="15" cy="15" r="7.500" fill="#c9d2da" /><circle cx="15" cy="15" r="5.300" fill="#0f63b8" /></A> },
];

/* ================= charts ================= */
const pt = (cx, cy, r, f) => [cx + r * Math.sin(f * 2 * Math.PI), cy - r * Math.cos(f * 2 * Math.PI)];
const arc = (cx, cy, R1, r, a, b) => {
  const big = b - a > 0.5 ? 1 : 0;
  const [x1, y1] = pt(cx, cy, R1, a), [x2, y2] = pt(cx, cy, R1, b), [x3, y3] = pt(cx, cy, r, b), [x4, y4] = pt(cx, cy, r, a);
  return `M${x1} ${y1}A${R1} ${R1} 0 ${big} 1 ${x2} ${y2}L${x3} ${y3}${r ? `A${r} ${r} 0 ${big} 0 ${x4} ${y4}` : ""}Z`;
};

/* ================= data ================= */
const departments = ["Select all", "Administration", "Fabrication", "Finishing", "Maintenance", "Melting", "Painting", "Purchasing", "Security", "Shipping"];
const fields = ["Age Group", "Date", "Days Lost", "Department", "Gender", "Incident Cost", "Incident Type", "Injury Location", "Plant", "Report Type", "Shift"];
const visibleFields = fields.slice(0, 9);

const menu = [["File", 73], ["Home", 87], ["Insert", 83], ["Modeling", 113], ["View", 76], ["Optimize", 110], ["Help", 55]];
const groups = [
  { name: "Data", w: 431, pl: 5, items: [["get", 60, "Get", "data", 1], ["excel", 60, "Excel", "workbook"], ["hub", 60, "Data", "hub", 1], ["sql", 40, "SQL", "Server"], ["enter", 60, "Enter", "data"], ["dataverse", 60, "Dataverse"], ["recent", 80, "Recent", "sources", 1]] },
  { name: "Queries", w: 145, pl: 8, items: [["transform", 73, "Transform", "data", 1], ["refresh", 52, "Refresh"]] },
  { name: "Insert", w: 183, pl: 7, items: [["newVisual", 55, "New", "visual"], ["textBox", 46, "Text", "box"], ["moreVisuals", 66, "More", "visuals", 1]] },
  { name: "Calculations", w: 143, pl: 10, items: [["calc", 62, "New", "measure"], ["quick", 58, "Quick", "measure"]] },
  { name: "Sensitivity", w: 92, pl: 0, items: [["sens", 91, "Sensitivity", "", 1]] },
  { name: "Share", w: 73, pl: 0, items: [["publish", 72, "Publish"]] },
];

const MiniChev = ({ c = K }) => <S w={8} h={5} sw={1.900} c={c}><path d="M.7 .7L4 4L7.300 .7" /></S>;

function Legend({ x, y, title, items }) {
  return (
    <>
      <Label $x={x} $y={y} $s={12.500} $w={600} $c="#605e5c" $lh={18} $ls={-0.050} $stroke={0.200}>{title}</Label>
      {items.map((t, i) => <Label key={t} $x={x + 12} $y={y + 18.500 + i * 23.200} $s={12.500} $c="#605e5c" $lh={18} $ls={-0.350}>{t}</Label>)}
    </>
  );
}
const G = "#605e5c";

function Report() {
  return (
    <Canvas>
      <Visual $x={55} $y={204} $w={28} $h={28} $bg="transparent">
        <S w={28} sw={2.600} c={G}><circle cx="14.500" cy="14" r="12.600" /><path d="M22.500 14H7.500M14 7.500L7.500 14L14 20.500" /></S>
      </Visual>
      <Visual $x={190} $y={220} $w={570} $h={83} $bg="#e6e6e6" $border="#3b3a39" $shadow>
        <Banner $font={`"Liberation Sans", Arial, sans-serif`} $w={700} $s={34.500} $lh={59} $c="#a6307b" $ls={0.700} $stroke={1.400}>Injury Data Analytics</Banner>
      </Visual>
      {[[67, "514"], [317, "718K"], [593, "1.40K"]].map(([x, v]) => (
        <Visual key={x} $x={x} $y={330} $w={228} $h={88} $bg="#a0333c" $border="#c7666c">
          <CardHead><Txt $font={DIN} $w={700} $s={18.500} $ls={0.150} $c={INK}>Total Incidents</Txt></CardHead>
          <CardValue $font={DIN} $w={400} $s={49} $lh={50} $c={INK} $ls={4} $stroke={0.600}>{v}</CardValue>
        </Visual>
      ))}

      <Visual $x={67} $y={443} $w={348} $h={256} $border={INK} $shadow>
        <VisualHead><VisualTitle>Sum of Incident Cost by Report Type</VisualTitle></VisualHead>
        <ChartBox>
          <S w={346} h={232} vb="68 466 346 232">
            <path d={arc(193.700, 580.300, 75.300, 45, 0, 0.484)} fill="#118dff" stroke="none" />
            <path d={arc(193.700, 580.300, 75.300, 45, 0.484, 0.9628)} fill="#12239e" stroke="none" />
            <path d={arc(193.700, 580.300, 75.300, 45, 0.9628, 1)} fill="#e66c37" stroke="none" />
            <g stroke="#b59a8e" strokeWidth="1"><path d="M173 496.500H184L185 504M247 524.500L252 519.500H263M131 648H142L147 641.500" /></g>
            <g stroke="none"><circle cx="320.800" cy="554.500" r="4.900" fill="#118dff" /><circle cx="320.800" cy="577.600" r="4.900" fill="#12239e" /><circle cx="320.800" cy="600.900" r="4.900" fill="#e66c37" /><circle cx="320.800" cy="624" r="4.900" fill="#6b007b" /></g>
          </S>
          <Label $x={44} $y={23} $s={11} $lh={16} $c={G}>27K (3.72%)</Label>
          <Label $x={199} $y={38} $s={11} $lh={15} $c={G} $ls={-0.100}>348K<br />(48.43%)</Label>
          <Label $x={19} $y={167} $s={11} $lh={15} $c={G} $ls={-0.100} $align="right">343K<br />(47.85%)</Label>
          <Legend x={248} y={60} title="Report Type" items={["Lost Time", "Medical Claim", "First Aid", "Near Miss"]} />
        </ChartBox>
      </Visual>

      <Visual $x={459} $y={443} $w={349} $h={233} $border="#5a4a44" $shadow>
        <VisualHead><VisualTitle>Count of Shift by Gender</VisualTitle></VisualHead>
        <ChartBox>
          <S w={347} h={209} vb="460 466 347 209">
            <circle cx="604" cy="569" r="74.500" fill="#118dff" stroke="none" />
            <path d={arc(604, 569, 74.500, 0, 0.8911, 1)} fill="#12239e" stroke="none" />
            <g stroke="#b59a8e" strokeWidth="1"><path d="M565 490.500H576L578.500 498M629.500 641L632 648.500H643" /></g>
            <circle cx="748.700" cy="566.500" r="4.900" fill="#118dff" stroke="none" /><circle cx="748.700" cy="589.600" r="4.900" fill="#12239e" stroke="none" />
          </S>
          <Label $x={45} $y={17} $s={11} $lh={16} $c={G} $ls={-0.200}>56 (10.89%)</Label>
          <Label $x={187} $y={175} $s={11} $lh={16} $c={G} $ls={-0.250}>458 (89.11%)</Label>
          <Legend x={283} y={72} title="Gender" items={["Male", "Female"]} />
        </ChartBox>
      </Visual>

      <Visual $x={67} $y={709} $w={348} $h={147}>
        <VisualHead><VisualTitle>Total Incidents</VisualTitle></VisualHead>
        <ChartBox>
          <S w={348} h={125} vb="67 731 348 125">
            <path d={arc(229, 847, 116.300, 81.500, -0.25, 0)} fill="#118dff" stroke="none" />
            <path d={arc(229, 847, 116.300, 81.500, 0, 0.25)} fill="#f3f2f1" stroke="none" />
          </S>
          <Label $x={135} $y={76} $font={DIN} $w={300} $s={37} $lh={40} $c={G} $ls={2} $sx={0.840}>514</Label>
          <Label $x={33} $y={101} $s={14} $lh={20} $c={G}>0</Label>
          <Label $x={283} $y={101} $s={14} $lh={20} $c={G} $ls={-0.300}>1028</Label>
        </ChartBox>
      </Visual>

      <Visual $x={459} $y={708} $w={349} $h={148} $border="#8e8a86">
        <ChartBox>
          <S w={347} h={146} c="#979593" sw={4}>
            <path d="M1 11V2H11M336 2H346V11M1 135V144H11M336 144H346V135M165 1.500H180M165 144.500H180M1.500 66V81M345.500 66V81" />
          </S>
          <Label $x={121} $y={46} $font={DIN} $w={400} $s={49} $lh={50} $ls={5} $sx={0.820} $stroke={1.200}>1185</Label>
          <Label $x={125} $y={99} $s={14.600} $lh={20} $c={G} $ls={-0.450}>Sum of Quarter</Label>
        </ChartBox>
      </Visual>
      <VisualTool $x={742}><Funnel w={20} h={18} c={G} sw={1.500} /></VisualTool>
      <VisualTool $x={776}><S w={20} h={4}><g fill={G} stroke="none"><circle cx="2" cy="2" r="1.600" /><circle cx="10" cy="2" r="1.600" /><circle cx="18" cy="2" r="1.600" /></g></S></VisualTool>

      <Visual $x={851} $y={272} $w={348} $h={289} $border="#3b3230" $shadow>
        <SlicerHead $s={12.800} $w={500} $lh={24} $ls={-0.300} $stroke={0.200}>Department</SlicerHead>
        {departments.map((d) => (
          <SlicerRow key={d}><BlackBox /><Txt $s={14.400} $ls={-0.350}>{d}</Txt></SlicerRow>
        ))}
        <SlicerScroll />
      </Visual>
      <PageEdge />
    </Canvas>
  );
}

const Row = ({ name }) => (
  <TreeRow $pl={9}>
    <Slot $w={39} $pl={19}>{name === "Date" && <ChevR />}</Slot>
    <Slot $w={24}><Check /></Slot>
    <Slot $w={23}>{name === "Date" ? <Cal /> : /Lost|Cost/.test(name) ? <Sigma /> : null}</Slot>
    <Txt $c={K} $s={14.500} $ls={-0.150}>{name}</Txt>
  </TreeRow>
);
const TableRow = ({ name, open, ok }) => (
  <TreeRow $pl={9}>
    <Slot $w={19}>{open ? <Chev w={15} h={8} c="#605e5c" /> : <Slot $w={14} $c><ChevR /></Slot>}</Slot>
    <Slot $w={23}><TableIcon ok={ok} /></Slot>
    <Txt $c={K} $s={14.500} $ls={-0.150}>{name}</Txt>
  </TreeRow>
);
const Section = ({ mt, title, children }) => (
  <>
    <FilterTitle $mt={mt}><PaneText>{title}</PaneText><Dots><i /><i /><i /></Dots></FilterTitle>
    {children}
    <FilterBox><PaneText>Add data fields here</PaneText></FilterBox>
  </>
);

export default function App() {
  return (
    <Window>
      <Global />
      <TitleBar>
        <QuickAccess>
          <S w={19} c="#fff" sw={1.400}><path d="M1 1H18V18H3L1 16ZM5 1V8H14.500V1M6 18V12H13V18M8 15V18" /></S>
          <S w={19} c="#fff" sw={1.500}><path d="M1.500 1V8.500H9M1.500 8.500L7 3C14-2 21 6 15 12L9 18" /></S>
          <S w={19} c="#797775" sw={1.400}><path d="M17.500 1V8.500H10M17.500 8.500L12 3C5-2-2 6 4 12L10 18" /></S>
          <DocTitle $s={14.600} $c="#fff" $ls={-0.020}>DAX • Last saved: 4/10/2025 at 8:09 PM</DocTitle>
          <Caret />
        </QuickAccess>
        <TopSearch><Mag w={20} /><Txt $s={16} $c="#1c5b4e">Search</Txt></TopSearch>
        <WindowControls>
          <Txt $s={14.600} $c="#fff" $ls={0}>Sign in</Txt>
          <Avatar><S w={25}><circle cx="12.500" cy="12.500" r="12.500" fill="#f3f2f1" stroke="none" /><circle cx="12.500" cy="7" r="3.500" stroke="#111" strokeWidth="1.700" /><path d="M5.500 13.500H19.500C19.500 23 5.500 23 5.500 13.500Z" stroke="#111" strokeWidth="1.700" /></S></Avatar>
          <ControlGap $r={41}><S w={13} h={2} c="#fff" sw={1.500}><path d="M0 1H13" /></S></ControlGap>
          <ControlGap $r={41}><S w={14} c="#fff" sw={1.500}><rect x="1" y="3.500" width="9.500" height="9.500" rx="2" /><path d="M4 1H10Q13 1 13 4V10" /></S></ControlGap>
          <ControlGap $r={0}><S w={14} c="#fff" sw={1.400}><path d="M.7 .7L13.300 13.300M13.300 .7L.7 13.300" /></S></ControlGap>
        </WindowControls>
      </TitleBar>

      <TabBar>
        {menu.map(([t, w]) => (
          <Tab key={t} $w={w}><TabLabel $on={t === "Home"} $w={t === "Home" ? 600 : 400} $s={17} $ls={-0.220} $lh={24}>{t}</TabLabel></Tab>
        ))}
        <ContextTab $w={94}><Txt $s={17} $w={600} $lh={24} $c="#0b4a40" $ls={-0.450}>Format</Txt></ContextTab>
        <ContextTab $w={124}><Txt $s={17} $w={600} $lh={24} $c="#0b4a40" $ls={-0.300}>Data / Drill</Txt></ContextTab>
        <ShareButton>
          <S w={20} h={19} c="#fff" sw={1.500}><path d="M1 5V17.500H15V13M5 13C5 8 9 5.500 13 5.500V1.500L19 7L13 12.500V9C9 9 7 10 5 13Z" /></S>
          <Txt $s={14.600} $ls={-0.300} $c="#fff" $ml={5}>Share</Txt>
          <Chev w={13} h={8} c="#fff" sw={1.500} />
        </ShareButton>
      </TabBar>

      <Ribbon>
        <Group $w={201}>
          <GroupBody $pl={17}>
            <RibbonItem $w={36}><IconSlot $pl={6}>{ribbonIcons.paste}</IconSlot><RibbonText $c="#c8c6c4">Paste</RibbonText></RibbonItem>
            <ClipList>
              <ClipRow><ClipIcon>{ribbonIcons.cut}</ClipIcon><RibbonText>Cut</RibbonText></ClipRow>
              <ClipRow><ClipIcon>{ribbonIcons.copy}</ClipIcon><RibbonText>Copy</RibbonText></ClipRow>
              <ClipRow><ClipIcon>{ribbonIcons.painter}</ClipIcon><RibbonText>Format painter</RibbonText></ClipRow>
            </ClipList>
          </GroupBody>
          <GroupFoot><Txt $s={12.500} $c="#484644" $lh={14} $ls={-0.150}>Clipboard</Txt></GroupFoot>
        </Group>
        {groups.map((g) => (
          <Group key={g.name} $w={g.w}>
            <GroupBody $pl={g.pl}>
              {g.items.map(([ic, w, a, b, ch]) => {
                const off = ic === "sens";
                return (
                  <RibbonItem key={ic} $w={w}>
                    <IconSlot $pl={iconShift[ic]}>{ribbonIcons[ic]}</IconSlot>
                    <RibbonText $c={off ? "#c8c6c4" : INK}>{a}</RibbonText>
                    <Line>{b && <RibbonText>{b}</RibbonText>}{ch && <MiniChev c={off ? "#c0bebc" : K} />}</Line>
                  </RibbonItem>
                );
              })}
            </GroupBody>
            <GroupFoot><Txt $s={12.500} $c="#484644" $lh={14} $ls={-0.150}>{g.name}</Txt></GroupFoot>
          </Group>
        ))}
        <Collapse><S w={11} h={7} sw={1.900}><path d="M1 6L5.500 1.500L10 6" /></S></Collapse>
      </Ribbon>

      <Body>
        <Rail>
          <RailItem $on><S w={18} c="#111" sw={1.300}><path d="M1 0V17H18M4 6V15H7V6ZM9 9V15H12V9ZM13.500 1.500V15H16.500V1.500Z" /></S></RailItem>
          <RailItem><S w={20} h={20} c="#797775" sw={1.500}><path d="M.8 1H19.200V18.500H.8ZM.8 3.500H19.200M.8 8.500H19.200M.8 13.500H19.200M7 3.500V18.500M13 3.500V18.500" /></S></RailItem>
          <RailItem><S w={23} h={23} c="#797775" sw={1.500}><path d="M1 7H10V16.500H1ZM1 10H10M13 .8H22V9.500H13ZM13 3.500H22M13 14H22V22.500H13ZM13 17H22M6 7V3.500H13M6 16.500V20H13" /></S></RailItem>
        </Rail>
        <Center>
          <Work>
            <Report />
            <Filters>
              <FilterHead>
                <Funnel />
                <PaneTitle $mt={1}>Filters</PaneTitle>
                <Push $gap={21}>
                  <S w={16} h={12} sw={1.600} c={INK}><path d="M.8 6C3-1.500 13-1.500 15.200 6" /><circle cx="8" cy="6.500" r="2.500" /></S>
                  <Double />
                </Push>
              </FilterHead>
              <SearchBox $w={225} $h={38} $ml={10} $bc="#a19f9d" $pl={13} $gap={17}><Mag c={INK} sw={1.200} /><Txt $s={15.800} $ls={-0.250}>Search</Txt></SearchBox>
              <Rule $mt={5} />
              <Section mt={20} title="Filters on this visual">
                <FilterBox $left><PaneText $lh={23}>Sum of Quarter</PaneText><PaneText $lh={23}>is (All)</PaneText></FilterBox>
              </Section>
              <Section mt={24} title="Filters on this page" />
              <Section mt={25} title="Filters on all pages" />
            </Filters>
          </Work>
          <PageStrip>
            <ViewMode $w={30} $pt={9} $ml={12}>
              <S w={24} h={18} c="#605e5c" sw={1.700}><rect x="1" y="1" width="22" height="12.500" /><path d="M12 13.500V17M8 17H16" /></S>
              <ModeBar />
            </ViewMode>
            <ViewMode $w={18} $pt={6} $ml={31}><S w={17} h={25} c="#605e5c" sw={1.600}><rect x="1" y="1" width="15" height="23" rx="1.500" /><path d="M7.500 20.500H9.500" strokeWidth="2" /></S></ViewMode>
            <PageArrow $l /><PageArrow />
            <PageTab><Txt $w={600} $s={14} $ls={-0.300}>Page 1</Txt></PageTab>
            <AddPage><S w={14} c="#fff" sw={3.200}><path d="M7 0V14M0 7H14" /></S></AddPage>
          </PageStrip>
        </Center>

        <Pane>
          <PaneHead><PaneTitle>Visualizations</PaneTitle><Push><Double /></Push></PaneHead>
          <BuildLabel><Txt $w={500} $s={14.400} $ls={-0.100} $stroke={0.250}>Build visual</Txt></BuildLabel>
          <ModeRow>
            <ModeButton $on $mr={45}><S w={30} h={30}><path d="M0 1H24" strokeWidth="1.500" /><rect x="1" y="7" width="28" height="9" fill={GREEN} stroke="#111" strokeDasharray="2 1.500" /><rect x="1" y="20.500" width="28" height="9" fill={GREEN} stroke="#111" strokeDasharray="2 1.500" /></S></ModeButton>
            <ModeButton $mr={40}><S w={28} h={28} sw={1.500} c={INK}><path d="M1 23V11H8V27M8 11V1H16V9M16 7H24" /><path d="M27 10L15 20 18 23 27 10ZM15 20C10 19 12 25 6 27C12 29 18 27 18 23" fill="#f3f2f1" /></S></ModeButton>
            <ModeButton><S w={30} h={30} sw={1.800} c={INK}><circle cx="13" cy="13" r="12" /><path d="M1 13L8 10 12 14 24 6" /><path d="M7 22V16M12 24V17M17 23V16M21 20V12" /><path d="M21.500 21.500L29 29" strokeWidth="3.500" /></S></ModeButton>
          </ModeRow>
          <S w={225} h={10} c="#979593" sw={1.400}><path d="M0 9.500H20L30 1L40 9.500H225" /></S>
          <IconGrid>
            {vizIcons.map((ic, i) => <GridCell key={i} $on={i === 22}><S w={23} sw={1.100}>{ic}</S></GridCell>)}
          </IconGrid>
          <Rule $c="#d8d6d4" />
          <FieldsLabel $mt={11}><VizText>Fields</VizText></FieldsLabel>
          <DropZone $h={36} $mt={7}>
            <FieldPill><VizText>Sum of Quarter</VizText><Push $gap={8}><Chev w={14} h={8} /><S w={11} sw={1.300}><path d="M.7 .7L10.300 10.300M10.300 .7L.7 10.300" /></S></Push></FieldPill>
          </DropZone>
          <FieldsLabel $mt={13}><VizText $w={600} $c="#484644">Drill through</VizText></FieldsLabel>
          <ToggleRow $mt={11}><VizText>Cross-report</VizText><Toggle><Txt $s={11.500} $c={G} $lh={16} $ls={-0.300}>Off</Txt><i /></Toggle></ToggleRow>
          <ToggleRow $mt={14}><VizText $mt={-2}>Keep all filters</VizText><Toggle $on><Txt $s={11.500} $c="#fff" $lh={16} $ls={-0.300}>On</Txt><i /></Toggle></ToggleRow>
          <DropZone $h={32} $mt={12}><VizText $ls={-0.080}>Add drill-through fields here</VizText></DropZone>
        </Pane>

        <Pane>
          <PaneHead><PaneTitle>Data</PaneTitle><Push><Double /></Push></PaneHead>
          <SearchBox $w={215} $h={33} $ml={5} $mt={8} $bc="#797775" $pl={9} $gap={8}><Mag c={G} sw={1.200} /><Txt $s={16} $c={K} $ls={0}>Search</Txt></SearchBox>
          <TreeWrap>
            <Tree>
              <TableRow name="SafetyData" />
              <TableRow name="SafetyData (2)" open />
              {fields.map((f) => <Row key={f} name={f} />)}
              <TableRow name="SafetyData (3)" open ok />
              {visibleFields.map((f) => <Row key={f} name={f} />)}
            </Tree>
            <TreeScroll />
          </TreeWrap>
        </Pane>
      </Body>

      <StatusBar>
        <Txt $c={K} $ls={0} $s={14.600}>Page 1 of 1</Txt>
        <Push>
          <S w={154} h={14} c="#484644" sw={1.800}><path d="M0 6H5M144 6H154M149 1V11" /><path d="M12 6H136" strokeWidth="1.300" /><path d="M55.500 -1V13" strokeWidth="4.500" /><path d="M74.500 2V10" strokeWidth="1.300" /></S>
          <Zoom $s={13.800} $c={G}>73%</Zoom>
          <S w={20} h={16} c={G} sw={1.500}><rect x=".8" y=".8" width="18.400" height="14.400" /><path d="M4 6V4H7M13 4H16V6M16 10V12H13M7 12H4V10" /></S>
          <Txt $c={K} $ls={-0.060} $s={14.500} $ml={17}>Update available (click to download)</Txt>
        </Push>
      </StatusBar>

      <Taskbar>
        <AppRow>
          {apps.map((a, i) => (
            <AppSlot key={i}>{a.on ? <AppActive>{a.i}</AppActive> : a.i}{a.run && <Running $on={a.on} />}</AppSlot>
          ))}
        </AppRow>
        <Tray>
          <S w={13} h={8} sw={1.600} c="#222"><path d="M1 7L6.500 1.500L12 7" /></S>
          <TrayItem $ml={24}><S w={21} h={18} stroke="none"><path d="M4 13C-1 12 0 6 4 6C6 0 14 0 15 5C20 5 20 12 16 13Z" fill="#797775" stroke={K} /><circle cx="14.500" cy="12" r="6" fill="#d9272e" stroke="none" /><path d="M12.500 10l4 4M16.500 10l-4 4" stroke="#fff" strokeWidth="1.400" /></S></TrayItem>
          <TrayItem $ml={20}><S w={20} h={20} c="#222" sw={1.500}><path d="M1.500 8C3 0 14-1 17 6M18 1V6.500H12.500M2 19V13H8M2 13C4 17 6 18 8 18.500" /><circle cx="14.500" cy="15" r="5.500" fill="#ff9a00" stroke="none" /></S></TrayItem>
          <TrayItem $ml={23}><Txt $s={14.200} $align="center">ENG<br />IN</Txt></TrayItem>
          <TrayItem $ml={22}><S w={20} h={16} c="#222" sw={1.500}><path d="M1 6C6 0 14 0 19 6M4 9C7 5 13 5 16 9M7 12C8.500 10 11.500 10 13 12" /><circle cx="10" cy="14" r="1.300" fill="#222" /></S></TrayItem>
          <TrayItem $ml={9}><S w={21} h={16} c="#222" sw={1.400}><path d="M1 5.500H4L9 1V15L4 10.500H1ZM12 5C13.500 7 13.500 9 12 11M15 3C17.500 6 17.500 10 15 13M18 1C21.500 5 21.500 11 18 15" /></S></TrayItem>
          <TrayItem $ml={10}><S w={21} h={18} c="#222" sw={1.500}><path d="M9 6H18V15H9M18 8.500H20V12.500H18" /><path d="M1 7L6 1L10 6V12L6 17L1 13Z" fill="#222" /><rect x="11.500" y="8.500" width="4" height="4" fill="#222" stroke="none" /></S></TrayItem>
          <TrayItem $ml={19}><Txt $s={14.300} $align="right" $ls={0.250}>13:31<br />12-04-2025</Txt></TrayItem>
        </Tray>
      </Taskbar>
    </Window>
  );
}
